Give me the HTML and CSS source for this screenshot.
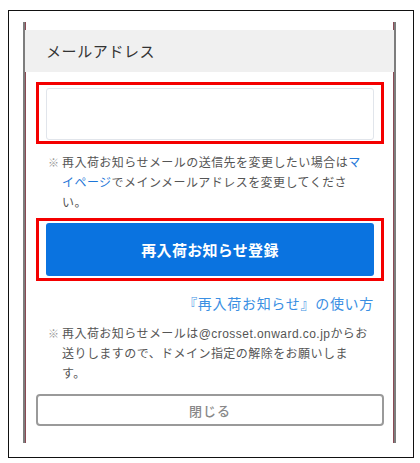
FILE: index.html
```html
<!DOCTYPE html>
<html lang="ja">
<head>
  <meta charset="UTF-8">
  <meta name="viewport" content="width=device-width, initial-scale=1.0">
  <title>再入荷お知らせ登録</title>
  <link rel="stylesheet" href="styles.css">
</head>
<body>
  <div class="frame">
    <div class="modal">
      <!-- Email field -->
      <div class="field-head">メールアドレス</div>

      <div class="modal-body">
        <div class="highlight">
          <input type="email" class="email-input">
        </div>

        <div class="note">
          <span class="note-mark">※</span>
          <p class="note-text">再入荷お知らせメールの送信先を変更したい場合は<a href="#" class="note-link">マイページ</a>でメインメールアドレスを変更してください。</p>
        </div>

        <!-- Register -->
        <div class="highlight highlight-btn">
          <button class="btn-register">再入荷お知らせ登録</button>
        </div>

        <div class="howto">
          <a href="#" class="howto-link">『再入荷お知らせ』の使い方</a>
        </div>

        <div class="note">
          <span class="note-mark">※</span>
          <p class="note-text">再入荷お知らせメールは@crosset.onward.co.jpからお送りしますので、ドメイン指定の解除をお願いします。</p>
        </div>

        <button class="btn-close">閉じる</button>
      </div>
    </div>
  </div>
</body>
</html>
```

FILE: styles.css
```css
* {
  margin: 0;
  padding: 0;
  box-sizing: border-box;
}

body {
  width: 420px;
  height: 463px;
  background: #fff;
  font-family: "Liberation Sans", "Noto Sans CJK JP", sans-serif;
  color: #555;
}

.frame {
  margin: 10px 0 0 8px;
  width: 406px;
  height: 448px;
  border: 1.5px solid #111;
  padding: 11px 0 0 14px;
}

.modal {
  width: 373px;
  height: 421px;
  padding-top: 8px;
  border-left: 2px solid #7d7d7d;
  border-right: 2px solid #7d7d7d;
  box-shadow: inset 1px 0 0 #8a4a55, inset -1px 0 0 #8a4a55;
  background: #fff;
}

.field-head {
  height: 42px;
  background: #f0f0f0;
  padding-left: 21px;
  font-size: 15px;
  line-height: 44px;
  color: #333;
  letter-spacing: 0.6px;
}

.modal-body {
  padding: 10px 10px 0 11px;
}

.highlight {
  border: 3px solid #f40000;
  padding: 3px 7px 1px 7px;
}

.email-input {
  display: block;
  width: 100%;
  height: 52px;
  border: 1px solid #e1e5eb;
  border-radius: 3px;
  background: #fff;
  outline: none;
}

.note {
  display: flex;
  margin: 9px 14px 0 12px;
  font-size: 12px;
  line-height: 20px;
  color: #555;
}

.note-mark {
  flex: 0 0 14px;
  color: #999;
  font-size: 11px;
}

.note-text {
  flex: 1;
  letter-spacing: 0.45px;
}

.note-link {
  color: #1d76d8;
  text-decoration: none;
}

.highlight-btn {
  margin-top: 5px;
  padding: 2px 7px;
}

.btn-register {
  display: block;
  width: 100%;
  height: 53px;
  border: none;
  border-radius: 3px;
  background: #0a73e0;
  color: #fff;
  font-family: inherit;
  font-size: 15px;
  font-weight: 700;
  letter-spacing: 0.3px;
}

.howto {
  margin-top: 13px;
  padding-right: 10px;
  text-align: right;
  line-height: 20px;
}

.howto-link {
  font-size: 14px;
  letter-spacing: 0.7px;
  color: #3a8fe3;
  text-decoration: none;
}

.howto + .note {
  margin-top: 10px;
}

.btn-close {
  display: block;
  width: 100%;
  height: 32px;
  margin-top: 10px;
  border: 2px solid #9a9a9a;
  border-radius: 4px;
  background: #fff;
  color: #888;
  font-family: inherit;
  font-size: 13px;
  font-weight: 500;
  letter-spacing: 1px;
}
```
